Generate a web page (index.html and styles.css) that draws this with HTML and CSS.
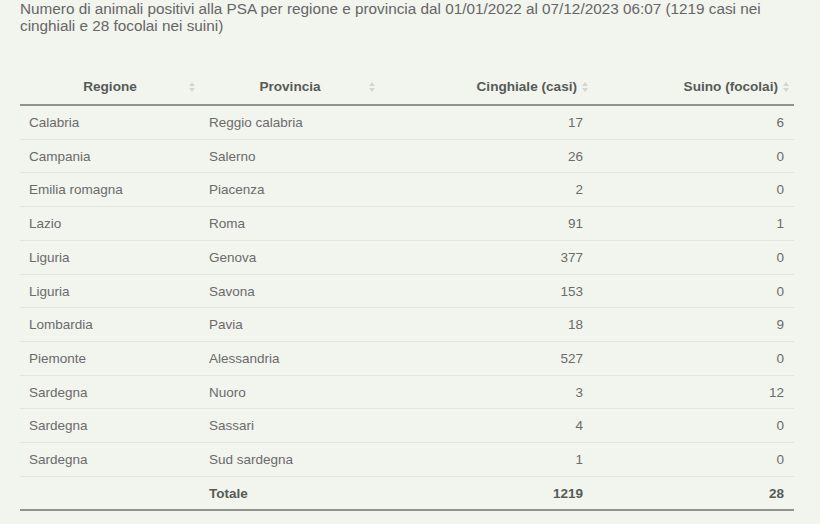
FILE: index.html
```html
<!DOCTYPE html>
<html lang="it">
<head>
<meta charset="utf-8">
<title>PSA</title>
<link rel="stylesheet" href="styles.css">
</head>
<body>
<div class="page">
  <p class="caption">Numero di animali positivi alla PSA per regione e provincia dal 01/01/2022 al 07/12/2023 06:07 (1219 casi nei cinghiali e 28 focolai nei suini)</p>
  <table class="data">
    <colgroup>
      <col class="c1"><col class="c2"><col class="c3"><col class="c4">
    </colgroup>
    <thead>
      <tr>
        <th class="center">Regione<span class="sort"></span></th>
        <th class="center">Provincia<span class="sort"></span></th>
        <th class="right">Cinghiale (casi)<span class="sort"></span></th>
        <th class="right">Suino (focolai)<span class="sort"></span></th>
      </tr>
    </thead>
    <tbody>
      <tr><td>Calabria</td><td>Reggio calabria</td><td class="num">17</td><td class="num">6</td></tr>
      <tr><td>Campania</td><td>Salerno</td><td class="num">26</td><td class="num">0</td></tr>
      <tr><td>Emilia romagna</td><td>Piacenza</td><td class="num">2</td><td class="num">0</td></tr>
      <tr><td>Lazio</td><td>Roma</td><td class="num">91</td><td class="num">1</td></tr>
      <tr><td>Liguria</td><td>Genova</td><td class="num">377</td><td class="num">0</td></tr>
      <tr><td>Liguria</td><td>Savona</td><td class="num">153</td><td class="num">0</td></tr>
      <tr><td>Lombardia</td><td>Pavia</td><td class="num">18</td><td class="num">9</td></tr>
      <tr><td>Piemonte</td><td>Alessandria</td><td class="num">527</td><td class="num">0</td></tr>
      <tr><td>Sardegna</td><td>Nuoro</td><td class="num">3</td><td class="num">12</td></tr>
      <tr><td>Sardegna</td><td>Sassari</td><td class="num">4</td><td class="num">0</td></tr>
      <tr><td>Sardegna</td><td>Sud sardegna</td><td class="num">1</td><td class="num">0</td></tr>
    </tbody>
    <tfoot>
      <tr><td></td><td>Totale</td><td class="num">1219</td><td class="num">28</td></tr>
    </tfoot>
  </table>
</div>
</body>
</html>
```
FILE: styles.css
```css
html, body {
  margin: 0;
  padding: 0;
  background: #f2f4ee;
}
body {
  font-family: "Liberation Sans", Arial, sans-serif;
  color: #666;
}
.page {
  padding: 1px 20px 0 20px;
  width: 780px;
}
.caption {
  margin: 0;
  font-size: 15.3px;
  line-height: 16.5px;
  color: #666;
}
.data {
  margin-top: 35px;
  width: 774px;
  border-collapse: collapse;
  table-layout: fixed;
  font-size: 13.5px;
}
.c1 { width: 180px; }
.c2 { width: 180px; }
.c3 { width: 213px; }
.c4 { width: 201px; }
.data th {
  position: relative;
  font-weight: bold;
  font-size: 13.6px;
  color: #555b57;
  padding: 10px 16px;
  line-height: 15px;
  border-bottom: 2px solid #8e938b;
}
.data th.center { text-align: center; }
.data th.right { text-align: right; }
.sort {
  position: absolute;
  right: 5px;
  top: 50%;
  margin-top: -5px;
  width: 6px;
  height: 10px;
}
.sort::before, .sort::after {
  content: "";
  position: absolute;
  left: 0;
  border-left: 3px solid transparent;
  border-right: 3px solid transparent;
}
.sort::before {
  top: 0;
  border-bottom: 4px solid #d3d7cf;
}
.sort::after {
  bottom: 0;
  border-top: 4px solid #d3d7cf;
}
.data td {
  padding: 10px 10px 8px 9px;
  line-height: 14.7px;
  border-bottom: 1px solid #e2e5de;
  color: #6b6b6b;
  white-space: nowrap;
}
.data td.num { text-align: right; }
.data tfoot td {
  font-weight: bold;
  color: #555b57;
  border-bottom: 2px solid #8e938b;
}
```
